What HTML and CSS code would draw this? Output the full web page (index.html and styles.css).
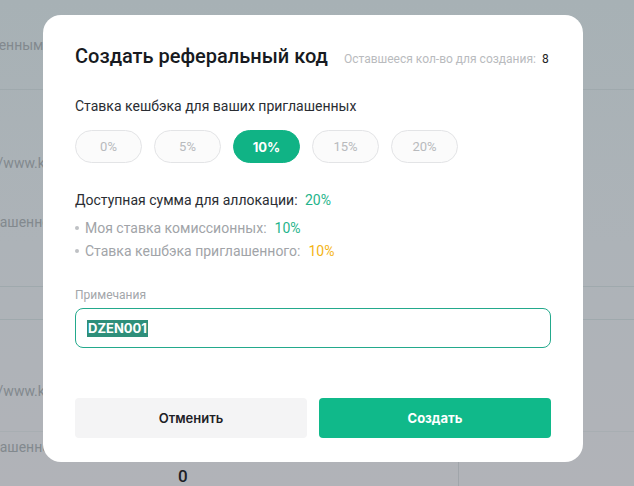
FILE: index.html
```html
<!DOCTYPE html>
<html lang="ru">
<head>
<meta charset="utf-8">
<title>Создать реферальный код</title>
<link rel="stylesheet" href="styles.css">
</head>
<body>
<div class="page">
  <div class="row row-a"><span class="cell-text t-a">приглашенным</span></div>
  <div class="row row-b">
    <span class="cell-text link">https://www.kucoin</span>
    <span class="cell-text t-b">приглашенному</span>
  </div>
  <div class="row row-c"></div>
  <div class="row row-d"><span class="cell-text link">https://www.kucoin</span></div>
  <div class="row row-e"><span class="cell-text t-b">приглашенному</span></div>
  <div class="row row-f">
    <div class="col-main"><span class="zero">0</span></div>
    <div class="col-side"></div>
  </div>
</div>

<div class="modal">
  <div class="modal-head">
    <h1 class="title">Создать реферальный код</h1>
    <span class="remain">Оставшееся кол-во для создания: <b>8</b></span>
  </div>

  <div class="label">Ставка кешбэка для ваших приглашенных</div>
  <div class="pills">
    <button class="pill">0%</button>
    <button class="pill">5%</button>
    <button class="pill active">10%</button>
    <button class="pill">15%</button>
    <button class="pill">20%</button>
  </div>

  <div class="avail">Доступная сумма для аллокации: <span class="green">20%</span></div>
  <ul class="bullets">
    <li><span>Моя ставка комиссионных:</span><span class="green">10%</span></li>
    <li><span>Ставка кешбэка приглашенного:</span><span class="yellow">10%</span></li>
  </ul>

  <div class="note-label">Примечания</div>
  <div class="input"><span class="sel">DZEN001</span></div>

  <div class="actions">
    <button class="btn cancel">Отменить</button>
    <button class="btn create">Создать</button>
  </div>
</div>
</body>
</html>
```

FILE: styles.css
```css
* { box-sizing: border-box; }
html, body { margin: 0; padding: 0; }
body {
  width: 634px;
  height: 486px;
  overflow: hidden;
  font-family: Roboto, "Noto Sans", Arial, sans-serif;
  background: linear-gradient(180deg, #a7b1b5 0%, #adb3b8 50%, #b1b3b8 100%);
  position: relative;
}

.page {
  display: flex;
  flex-direction: column;
  color: #82898e;
  font-size: 14px;
}
.row { border-bottom: 1px solid #9fa9ad; display: flex; flex-direction: column; }
.cell-text { white-space: nowrap; line-height: 18px; }
.t-a { margin-left: -58px; }
.t-b { margin-left: -38px; }
.cell-text.link { margin-left: -42px; }
.row-a { height: 90px; justify-content: center; padding-top: 1px; }
.row-b { height: 197px; padding-top: 64px; gap: 41px; }
.row-c { height: 33px; }
.row-d { height: 112px; padding-top: 62px; border-bottom-color: #a8aeb2; }
.row-e { height: 30px; padding-top: 6px; border-bottom: none; }
.row-f { flex-direction: row; height: 40px; border-bottom: none; }
.col-main { width: 459px; border-right: 1px solid #a0a5aa; padding-left: 178px; padding-top: 4px; }
.zero { color: #1d2126; font-size: 17px; font-weight: 500; }

.modal {
  position: absolute;
  left: 43px;
  top: 15px;
  width: 540px;
  height: 447px;
  background: #fff;
  border-radius: 18px;
  padding: 28px 32px 0;
  display: flex;
  flex-direction: column;
}

.modal-head { display: flex; align-items: baseline; gap: 16px; }
.title {
  margin: 0;
  font-size: 20px;
  font-weight: 500;
  color: #171a21;
  line-height: 26px;
}
.remain { font-size: 12px; color: #b9bbbe; }
.remain b { font-weight: 400; color: #222; margin-left: 3px; }

.label {
  margin-top: 28px;
  font-size: 14px;
  color: #2a2d33;
  line-height: 18px;
}
.pills { display: flex; gap: 12px; margin-top: 15px; }
.pill {
  width: 67px;
  height: 33px;
  border-radius: 17px;
  border: 1px solid #e3e4e6;
  background: #fbfbfb;
  color: #b8babd;
  font-family: Roboto, Arial, sans-serif;
  font-size: 13px;
  padding: 0;
}
.pill.active {
  background: #10b385;
  border-color: #10b385;
  color: #fff;
  font-family: Inter, Roboto, sans-serif;
  font-weight: 700;
  font-size: 13px;
}

.avail {
  margin-top: 28px;
  font-size: 14px;
  color: #2a2d33;
  line-height: 18px;
}
.green { color: #1fb48b; margin-left: 4px; }
.yellow { color: #f4b414; margin-left: 4px; }
.bullets {
  list-style: none;
  margin: 10px 0 0;
  padding: 0;
  font-size: 14px;
  color: #a1a4a8;
}
.bullets li { line-height: 18px; margin-bottom: 5px; display: flex; align-items: center; }
.bullets li:last-child { margin-bottom: 0; }
.bullets li .green, .bullets li .yellow { margin-left: 8px; }
.bullets li::before {
  content: "";
  width: 4px;
  height: 4px;
  border-radius: 50%;
  background: #bfc1c4;
  margin-right: 6px;
}

.note-label {
  margin-top: 28px;
  font-size: 12px;
  color: #a3a6aa;
  line-height: 15px;
}
.input {
  margin-top: 5px;
  height: 40px;
  border: 1px solid #23a98c;
  border-radius: 8px;
  display: flex;
  align-items: center;
  padding-left: 11px;
}
.sel {
  background: #2e8f7a;
  color: #fff;
  font-family: Inter, Roboto, sans-serif;
  font-weight: 700;
  font-size: 13px;
  line-height: 17px;
  padding: 0 1px;
}

.actions { display: flex; gap: 12px; margin-top: 50px; }
.btn {
  flex: 1;
  height: 40px;
  border: none;
  border-radius: 4px;
  font-family: Inter, Roboto, sans-serif;
  font-size: 13px;
  font-weight: 600;
}
.cancel { background: #f4f4f5; color: #1e2126; }
.create { background: #10b98a; color: #fff; font-weight: 700; }
```
